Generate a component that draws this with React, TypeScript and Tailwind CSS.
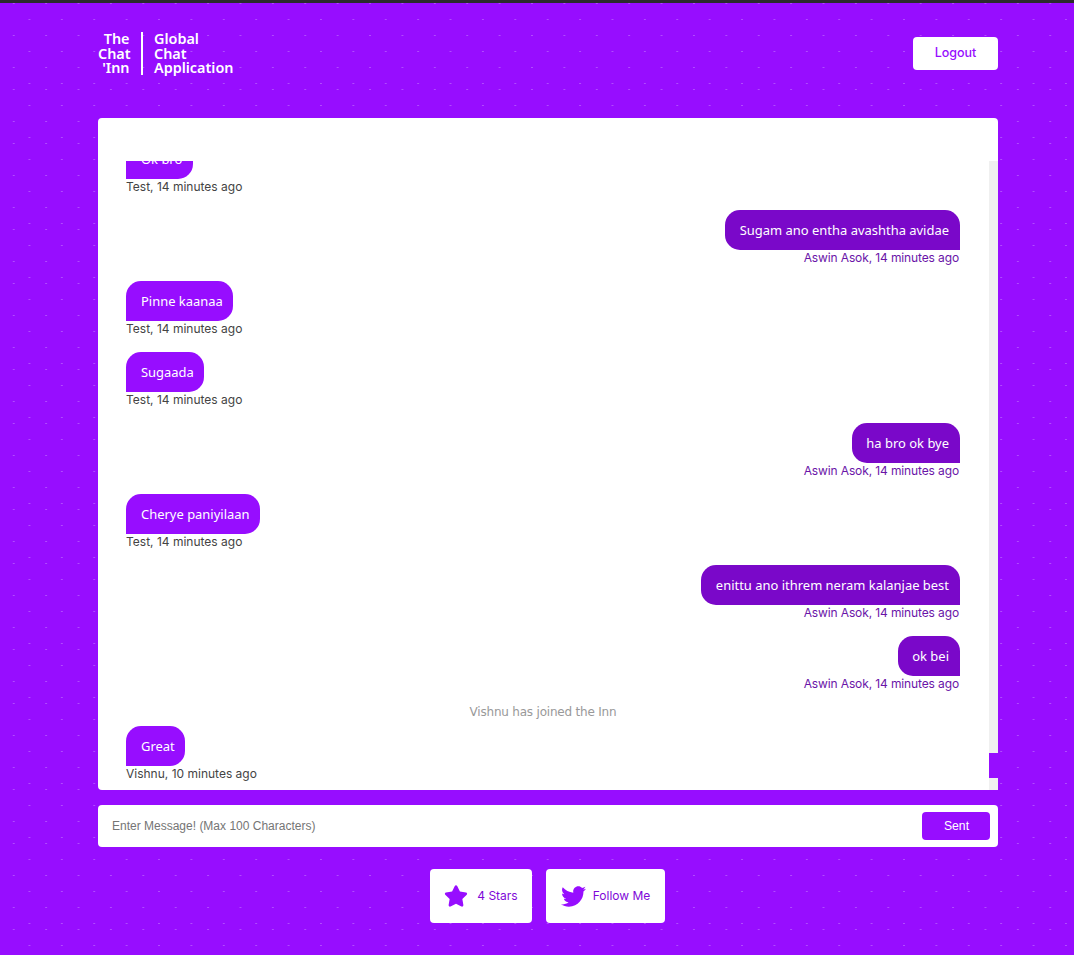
import { FaStar, FaTwitter } from 'react-icons/fa';

type Msg =
  | { kind: 'in' | 'out'; text: string; who: string; when: string }
  | { kind: 'sys'; text: string };

const messages: Msg[] = [
  { kind: 'in', text: 'Ok bro', who: 'Test', when: '14 minutes ago' },
  { kind: 'out', text: 'Sugam ano entha avashtha avidae', who: 'Aswin Asok', when: '14 minutes ago' },
  { kind: 'in', text: 'Pinne kaanaa', who: 'Test', when: '14 minutes ago' },
  { kind: 'in', text: 'Sugaada', who: 'Test', when: '14 minutes ago' },
  { kind: 'out', text: 'ha bro ok bye', who: 'Aswin Asok', when: '14 minutes ago' },
  { kind: 'in', text: 'Cherye paniyilaan', who: 'Test', when: '14 minutes ago' },
  { kind: 'out', text: 'enittu ano ithrem neram kalanjae best', who: 'Aswin Asok', when: '14 minutes ago' },
  { kind: 'out', text: 'ok bei', who: 'Aswin Asok', when: '14 minutes ago' },
  { kind: 'sys', text: 'Vishnu has joined the Inn' },
  { kind: 'in', text: 'Great', who: 'Vishnu', when: '10 minutes ago' },
];

function Bubble({ m }: { m: Msg }) {
  if (m.kind === 'sys') {
    return (
      <p className="h-[19px] shrink-0 text-center text-[12px] leading-[11px] tracking-[-0.2px] text-[#999999] font-['DejaVu_Sans',sans-serif]">
        {m.text}
      </p>
    );
  }
  if (m.kind === 'out') {
    return (
      <div className="mb-[13px] flex h-[58px] shrink-0 flex-col items-end last:mb-0">
        <div className="flex h-10 items-center rounded-t-[15px] rounded-bl-[15px] bg-[#7a08c9] pl-[14.5px] pr-[11px] pt-[1px] text-[12.96px] text-white font-['Noto_Sans',sans-serif]">
          {m.text}
        </div>
        <p className="pr-[1px] text-[12px] leading-[16px] tracking-[-0.12px] text-[#6a14a8] font-['Inter',sans-serif]">
          {m.who}, {m.when}
        </p>
      </div>
    );
  }
  return (
    <div className="mb-[13px] flex h-[58px] shrink-0 flex-col items-start last:mb-0">
      <div className="flex h-10 items-center rounded-t-[15px] rounded-br-[15px] bg-[#970dff] pl-[15px] pr-[10.5px] pt-[1px] text-[12.96px] text-white font-['Noto_Sans',sans-serif]">
        {m.text}
      </div>
      <p className="text-[12px] leading-[16px] text-[#444444] font-['Inter',sans-serif]">
        {m.who}, {m.when}
      </p>
    </div>
  );
}

export default function App() {
  return (
    <div className="min-h-screen border-t-[3px] border-[#2b2b2b] bg-[#970dff] bg-[radial-gradient(circle_at_29.5px_16.5px,rgba(255,255,255,0.25)_0.8px,transparent_0.8px),radial-gradient(circle_at_13.5px_32.5px,rgba(255,255,255,0.25)_0.8px,transparent_0.8px),radial-gradient(circle_at_29.5px_48.5px,rgba(255,255,255,0.25)_0.8px,transparent_0.8px),radial-gradient(circle_at_13.5px_64.5px,rgba(255,255,255,0.25)_0.8px,transparent_0.8px),radial-gradient(circle_at_29.5px_80.5px,rgba(255,255,255,0.25)_0.8px,transparent_0.8px),radial-gradient(circle_at_13.5px_86.5px,rgba(255,255,255,0.25)_0.8px,transparent_0.8px),radial-gradient(circle_at_29.5px_102.5px,rgba(255,255,255,0.25)_0.8px,transparent_0.8px),radial-gradient(circle_at_13.5px_118.5px,rgba(255,255,255,0.25)_0.8px,transparent_0.8px),radial-gradient(circle_at_29.5px_134.5px,rgba(255,255,255,0.25)_0.8px,transparent_0.8px),radial-gradient(circle_at_13.5px_0.5px,rgba(255,255,255,0.25)_0.8px,transparent_0.8px)] bg-[length:32.4px_140px] pl-[98px] pr-[76px]">
      <header className="flex h-[115px] items-start justify-between pt-[29px]">
        <div className="flex items-center text-[14.4px] font-semibold leading-[14.5px] text-white font-['Noto_Sans',sans-serif]">
          <div className="w-[32px] pr-[0.5px] text-right">
            The
            <br />
            Chat
            <br />
            'Inn
          </div>
          <div className="mx-[11px] h-[43px] w-[2px] bg-white" />
          <div>
            Global
            <br />
            Chat
            <br />
            Application
          </div>
        </div>
        <button className="mt-[5px] h-[33px] w-[85px] rounded-[4px] bg-white text-[12.5px] font-medium text-[#970dff] font-['Inter',sans-serif]">
          Logout
        </button>
      </header>

      <main className="flex h-[672px] rounded-[4px] bg-white pt-[43px]">
        <div className="flex min-w-0 flex-1 flex-col justify-end overflow-hidden pb-[6px] pl-[28px] pr-[29px]">
          {messages.map((m, i) => (
            <Bubble key={i} m={m} />
          ))}
        </div>
        <div className="w-[9px] shrink-0 bg-[#f0f0f0] pt-[592px]">
          <div className="h-[25px] bg-[#970dff]" />
        </div>
      </main>

      <form className="mt-[15px] flex h-[42px] items-center rounded-[4px] bg-white pl-[14px] pr-[8px]">
        <input
          className="min-w-0 flex-1 bg-transparent text-[12px] text-black outline-none placeholder:text-[#757575] font-['Liberation_Sans',sans-serif]"
          placeholder="Enter Message! (Max 100 Characters)"
        />
        <button
          type="button"
          className="h-[28px] w-[68px] rounded-[4px] bg-[#970dff] pl-[1px] text-[12.2px] text-white font-['Liberation_Sans',sans-serif]"
        >
          Sent
        </button>
      </form>

      <div className="mt-[22px] flex justify-center gap-[14px] pr-[1px] text-[12px] text-[#8008d8] font-['Inter',sans-serif]">
        <a className="flex h-[54px] w-[102px] items-center justify-center gap-[9px] rounded-[4px] bg-white">
          <FaStar className="text-[24px] text-[#970dff]" />
          4 Stars
        </a>
        <a className="flex h-[54px] w-[119px] items-center justify-center gap-[7px] rounded-[4px] bg-white">
          <FaTwitter className="text-[25px] text-[#970dff]" />
          Follow Me
        </a>
      </div>
    </div>
  );
}
